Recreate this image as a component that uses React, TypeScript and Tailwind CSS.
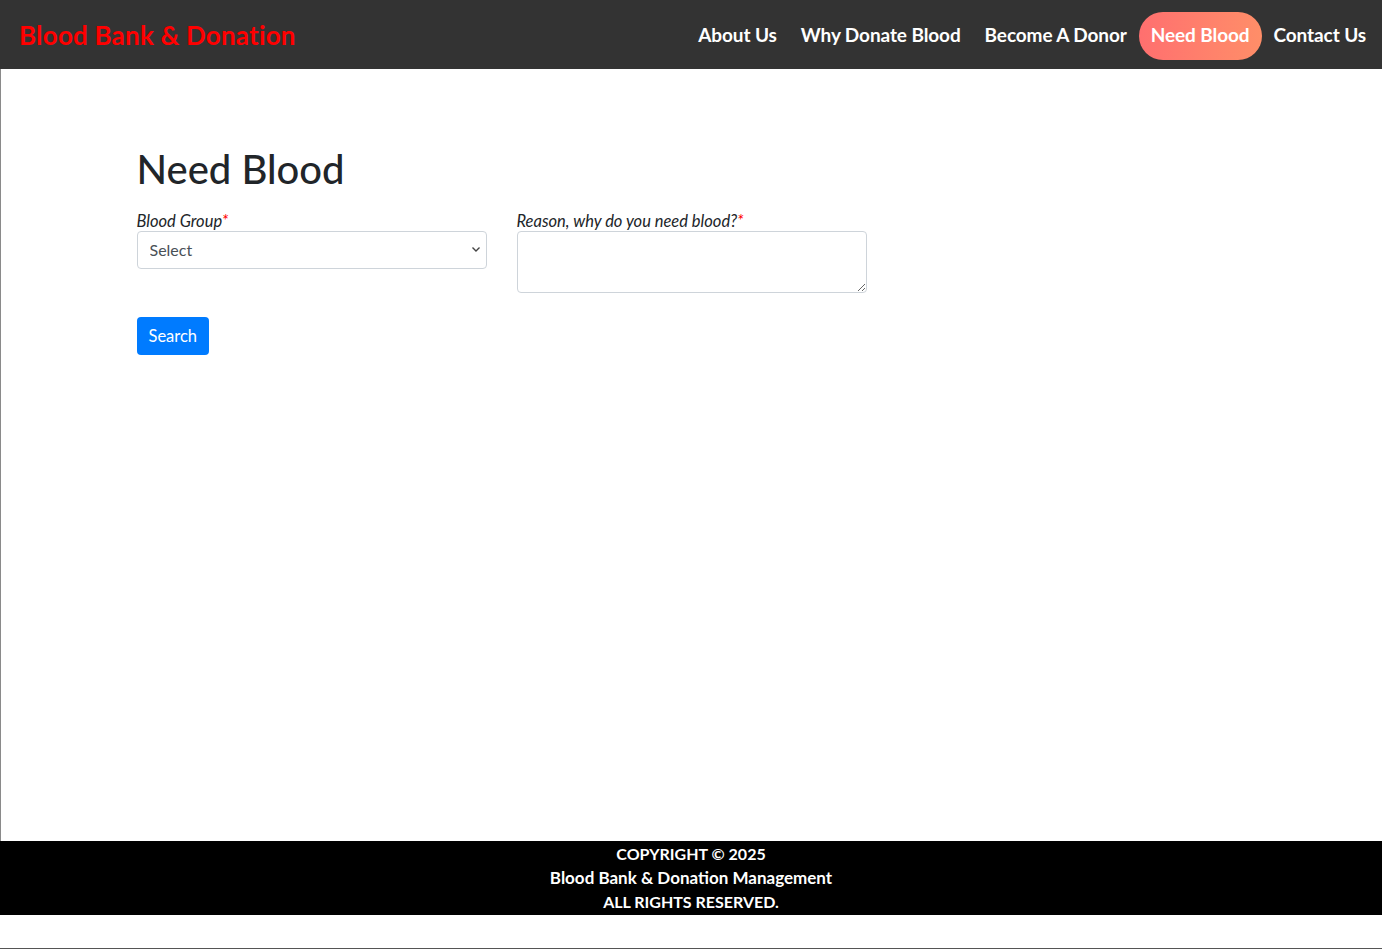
import React from 'react';

const navLinks = ['About Us', 'Why Donate Blood', 'Become A Donor', 'Need Blood', 'Contact Us'];

const App: React.FC = () => {
  return (
    <div className="min-h-[949px] flex flex-col bg-white font-[Lato,'Noto_Sans',sans-serif] text-[#212529]">
      {/* Top Navbar */}
      <header className="h-[69px] bg-[#333333] flex items-center justify-between pl-[19px] pr-[4px]">
        <a className="text-[26px] font-bold text-[#ff0000] leading-none tracking-[0.2px]">Blood Bank &amp; Donation</a>
        <nav className="flex items-center pt-[2px]">
          {navLinks.map((l) => (
            <a
              key={l}
              className={`px-3 h-[48px] flex items-center text-[19px] font-bold text-white tracking-[-0.1px] ${
                l === 'Need Blood' ? 'rounded-full bg-gradient-to-r from-[#ff6f6f] to-[#ff8e68]' : ''
              }`}
            >
              {l}
            </a>
          ))}
        </nav>
      </header>

      {/* Content */}
      <main className="flex-1 border-l border-[#8a8a8a]">
        <div className="w-[1140px] mx-auto px-[15px] pt-[76px]">
          <h1 className="text-[40px] font-medium leading-[1.2] mb-[14px] text-[#212529]">Need Blood</h1>
          <div className="flex gap-[30px]">
            <div className="w-[350px]">
              <label className="block italic text-[16.5px] leading-[20px] pt-[4px]">
                Blood Group<span className="text-[#ff0000]">*</span>
              </label>
              <div className="relative">
                <select className="appearance-none w-full h-[38px] border border-[#ced4da] rounded-[4px] px-3 text-[16px] text-[#495057] bg-white">
                  <option>Select</option>
                  <option>A+</option>
                  <option>A-</option>
                  <option>B+</option>
                  <option>B-</option>
                  <option>O+</option>
                  <option>O-</option>
                  <option>AB+</option>
                  <option>AB-</option>
                </select>
                <svg className="absolute right-[6px] top-[15px] pointer-events-none" width="10" height="7" viewBox="0 0 10 7">
                  <path d="M1.5 1.5 L5 5 L8.5 1.5" fill="none" stroke="#444" strokeWidth="1.4" />
                </svg>
              </div>
            </div>
            <div className="w-[350px]">
              <label className="block italic text-[16.5px] leading-[20px] pt-[4px]">
                Reason, why do you need blood?<span className="text-[#ff0000]">*</span>
              </label>
              <textarea className="block w-full h-[62px] border border-[#ced4da] rounded-[4px] px-3 py-1.5 text-[16px]" />
            </div>
          </div>
          <button className="mt-[24px] h-[38px] px-3 bg-[#007bff] text-white text-[16.5px] rounded-[4px] leading-none">
            Search
          </button>
        </div>
      </main>

      {/* Footer */}
      <footer className="bg-black text-white text-center font-bold text-[17px] leading-6 py-[1px]">
        <p className="text-[16px]">COPYRIGHT © 2025</p>
        <p>Blood Bank &amp; Donation Management</p>
        <p className="text-[16px]">ALL RIGHTS RESERVED.</p>
      </footer>
      <div className="h-[34px] border-b border-[#555]" />
    </div>
  );
};

export default App;
